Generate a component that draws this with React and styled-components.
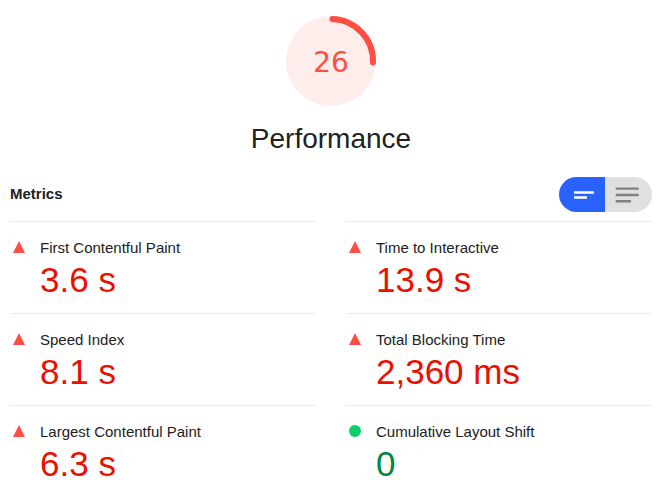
import React, { useState } from "react"
import styled, { createGlobalStyle } from "styled-components"

const GlobalStyle = createGlobalStyle`
  * {
    box-sizing: border-box;
  }

  body {
    margin: 0;
    background-color: #ffffff;
    color: #212121;
    font-family: "Liberation Sans", Arial, sans-serif;
  }
`

const Report = styled.main`
  padding: 12px 14px 0 10px;
`

const ScoreHeader = styled.header`
  display: flex;
  flex-direction: column;
  align-items: center;
`

const Gauge = styled.div`
  display: grid;
  place-items: center;
  width: 98px;
  height: 98px;

  > * {
    grid-area: 1 / 1;
  }
`

const GaugeScore = styled.span`
  padding-top: 4px;
  color: #ff4e42;
  font-family: "DejaVu Sans", sans-serif;
  font-size: 28px;
  line-height: 36px;
`

const Title = styled.h1`
  margin: 13px 0 0;
  font-size: 28px;
  font-weight: 400;
  line-height: 32px;
`

const MetricsHeader = styled.div`
  display: flex;
  align-items: center;
  justify-content: space-between;
  margin-top: 22px;
  padding-bottom: 9px;
`

const MetricsTitle = styled.h2`
  margin: 0;
  padding-bottom: 2px;
  font-size: 15px;
  font-weight: 700;
  line-height: 18px;
`

const Toggle = styled.div`
  display: flex;
  height: 35px;
  border-radius: 18px;
  overflow: hidden;
`

const ToggleButton = styled.button`
  display: flex;
  align-items: center;
  justify-content: center;
  width: ${(props) => (props.$wide ? "47px" : "46px")};
  padding: 0;
  border: 0;
  background-color: ${(props) => (props.$active ? "#2962ff" : "#e0e0e0")};
  color: ${(props) => (props.$active ? "#ffffff" : "#808080")};
  cursor: pointer;
`

const MetricsGrid = styled.div`
  display: grid;
  grid-template-columns: 1fr 1fr;
  column-gap: 30px;
`

const Metric = styled.section`
  display: flex;
  align-items: flex-start;
  padding: 16px 0 11px;
  border-top: 1px solid #ebebeb;
`

const StatusIcon = styled.svg`
  flex: none;
  margin: 3px 15px 0 3px;
`

const MetricName = styled.h3`
  margin: 0;
  font-size: 15px;
  font-weight: 400;
  line-height: 20px;
`

const MetricValue = styled.div`
  color: ${(props) => (props.$status === "pass" ? "#018642" : "#eb0f00")};
  font-size: 35px;
  line-height: 44px;
`

const metrics = [
  { name: "First Contentful Paint", value: "3.6 s", status: "fail" },
  { name: "Time to Interactive", value: "13.9 s", status: "fail" },
  { name: "Speed Index", value: "8.1 s", status: "fail" },
  { name: "Total Blocking Time", value: "2,360 ms", status: "fail" },
  { name: "Largest Contentful Paint", value: "6.3 s", status: "fail" },
  { name: "Cumulative Layout Shift", value: "0", status: "pass" },
]

const Status = ({ status }) => (
  <StatusIcon width="12" height="12" viewBox="0 0 12 12" aria-hidden="true">
    {status === "pass" ? (
      <circle cx="6" cy="6" r="6" fill="#0cce6b" />
    ) : (
      <path d="M6 0l6 12H0z" fill="#ff4e42" />
    )}
  </StatusIcon>
)

const ScoreGauge = ({ score }) => (
  <Gauge>
    <svg width="98" height="98" viewBox="0 0 98 98" aria-hidden="true">
      <circle cx="49" cy="49" r="45" fill="#ffedec" />
      <circle
        cx="49"
        cy="49"
        r="42"
        fill="none"
        stroke="#ff4e42"
        strokeWidth="6"
        strokeLinecap="round"
        pathLength="100"
        strokeDasharray={`${score - 1} 100`}
        transform="rotate(-88 49 49)"
      />
    </svg>
    <GaugeScore>{score}</GaugeScore>
  </Gauge>
)

const App = () => {
  const [expanded, setExpanded] = useState(false)

  return (
    <Report>
      <GlobalStyle />
      <ScoreHeader>
        <ScoreGauge score={26} />
        <Title>Performance</Title>
      </ScoreHeader>
      <MetricsHeader>
        <MetricsTitle>Metrics</MetricsTitle>
        <Toggle>
          <ToggleButton
            $active={!expanded}
            aria-label="Compact view"
            onClick={() => setExpanded(false)}
          >
            <svg width="46" height="35" viewBox="0 0 46 35" fill="currentColor">
              <path d="M15 14.2h20v2.6H15zM15 19.2h13v2.6H15z" />
            </svg>
          </ToggleButton>
          <ToggleButton
            $wide
            $active={expanded}
            aria-label="Expanded view"
            onClick={() => setExpanded(true)}
          >
            <svg width="47" height="35" viewBox="0 0 47 35" fill="currentColor">
              <path d="M10.7 10.4h23v2.4h-23zM10.7 16.8h23v2.4h-23zM10.7 23.1h15.3v2.4h-15.3z" />
            </svg>
          </ToggleButton>
        </Toggle>
      </MetricsHeader>
      <MetricsGrid>
        {metrics.map((metric) => (
          <Metric key={metric.name}>
            <Status status={metric.status} />
            <div>
              <MetricName>{metric.name}</MetricName>
              <MetricValue $status={metric.status}>{metric.value}</MetricValue>
            </div>
          </Metric>
        ))}
      </MetricsGrid>
    </Report>
  )
}

export default App
